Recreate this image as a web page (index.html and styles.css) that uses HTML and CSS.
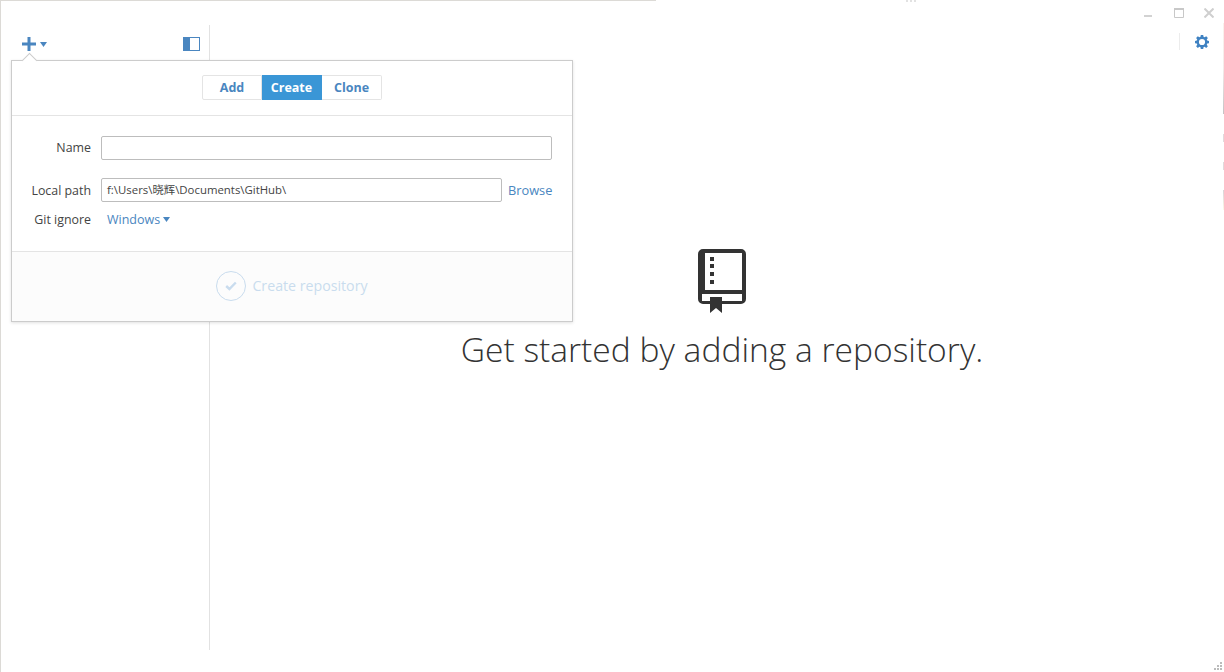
FILE: index.html
```html
<!DOCTYPE html>
<html lang="en">
<head>
<meta charset="utf-8">
<title>GitHub</title>
<link rel="stylesheet" href="styles.css">
</head>
<body>
<div class="window">
  <aside class="sidebar">
    <div class="side-head">
      <button class="add-btn" aria-label="Add">
        <svg class="plus" width="14" height="14" viewBox="0 0 14 14"><path d="M5.500 0h3v5.500H14v3H8.500V14h-3V8.500H0v-3h5.500z"/></svg>
        <svg class="caret" width="7" height="5" viewBox="0 0 7 5"><path d="M0 0h7L3.500 5z"/></svg>
      </button>
      <svg class="toggle" width="17" height="14" viewBox="0 0 17 14"><rect x=".5" y=".5" width="16" height="13" fill="#fff" stroke="#4a86c0"/><rect width="7" height="14" fill="#4a86c0"/></svg>
    </div>
  </aside>
  <main class="main">
    <div class="top">
      <svg class="gear" width="14" height="14" viewBox="0 0 15 15"><path fill-rule="evenodd" d="M6.200 0h2.600l.3 2 1.200.5 1.700-1.200 1.800 1.800-1.200 1.700.5 1.200 1.900.3v2.600l-1.900.3-.5 1.200 1.200 1.700-1.800 1.800-1.700-1.200-1.200.5-.3 2H6.200l-.3-2-1.200-.5L3 13.900l-1.800-1.800 1.200-1.700-.5-1.200L0 8.900V6.300l1.900-.3.500-1.200-1.200-1.700L3 1.300l1.700 1.200 1.200-.5zM7.500 4.200a3.300 3.300 0 1 0 0 6.600 3.300 3.300 0 0 0 0-6.600z"/></svg>
    </div>
    <div class="empty">
      <svg class="book" width="48" height="64" viewBox="0 0 48 64"><path fill-rule="evenodd" d="M5 0h38a5 5 0 0 1 5 5v45a5 5 0 0 1-5 5H5a5 5 0 0 1-5-5V5a5 5 0 0 1 5-5zM7 4v37h37V4zM4 45v7h40v-7z"/><path d="M12 48h12v16l-6-5-6 5z"/><path d="M12 8h4v4h-4zM12 15h4v4h-4zM12 23h4v4h-4zM12 31h4v4h-4z"/></svg>
      <h1 class="headline">Get started by adding a repository.</h1>
    </div>
  </main>

  <section class="popover">
    <span class="arrow"></span>
    <div class="tabs-row">
      <div class="tabs">
        <span class="tab">Add</span>
        <span class="tab active">Create</span>
        <span class="tab">Clone</span>
      </div>
    </div>
    <div class="form">
      <div class="row name-row">
        <label class="label">Name</label>
        <div class="field"></div>
      </div>
      <div class="row path-row">
        <label class="label">Local path</label>
        <div class="field path">f:\Users\晓辉\Documents\GitHub\</div>
        <a class="browse">Browse</a>
      </div>
      <div class="row ignore-row">
        <label class="label">Git ignore</label>
        <a class="drop">Windows <svg class="drop-caret" width="7" height="5" viewBox="0 0 7 5"><path d="M0 0h7L3.500 5z"/></svg></a>
      </div>
    </div>
    <div class="foot">
      <span class="check"><svg width="12" height="10" viewBox="0 0 12 10"><path d="M1.200 5l3.200 3L10.800 1.500" fill="none" stroke="#c9dcee" stroke-width="2.400"/></svg></span>
      <span class="create">Create repository</span>
    </div>
  </section>

  <div class="win-controls">
    <svg width="10" height="10" viewBox="0 0 10 10"><rect x="0" y="7" width="8" height="2" fill="#d2d2d2"/></svg>
    <svg width="10" height="10" viewBox="0 0 10 10"><path d="M.5 1.500h9v8h-9z" fill="none" stroke="#c8c8c8"/><rect width="10" height="2" fill="#c8c8c8"/></svg>
    <svg width="10" height="10" viewBox="0 0 10 10"><path d="M.5.5l9 9M9.500.5l-9 9" stroke="#cfcfcf" stroke-width="2"/></svg>
  </div>
  <span class="gear-sep"></span>
  <span class="top-mark"></span>
  <span class="edge e1"></span>
  <span class="edge e2"></span>
  <span class="edge e3"></span>
  <span class="edge e4"></span>
  <svg class="grip" width="8" height="8" viewBox="0 0 8 8" fill="#bbb"><rect x="6" y="0" width="2" height="2"/><rect x="3" y="3" width="2" height="2"/><rect x="6" y="3" width="2" height="2"/><rect x="0" y="6" width="2" height="2"/><rect x="3" y="6" width="2" height="2"/><rect x="6" y="6" width="2" height="2"/></svg>
</div>
</body>
</html>
```
FILE: styles.css
```css
* { box-sizing: border-box; }
html, body { margin: 0; height: 100%; background: #fff; overflow: hidden; }
body { font-family: "Open Sans", "Noto Sans CJK SC", sans-serif; color: #333; }
.window { position: relative; width: 1224px; height: 672px; display: flex; padding: 25px 0 22px 1px; }
.window::before { content: ""; position: absolute; left: 0; top: 0; width: 655px; height: 672px; border: 1px solid #dcdad6; border-right: 0; pointer-events: none; }
.sidebar { width: 209px; border-right: 1px solid #e2e2e2; }
.side-head { display: flex; justify-content: space-between; align-items: flex-start; padding: 12px 9px 0 21px; }
.add-btn { display: flex; align-items: center; gap: 4px; padding: 0; border: 0; background: none; height: 14px; }
.plus { fill: #4a86c0; }
.caret { fill: #4a86c0; }
.main { flex: 1; display: flex; flex-direction: column; }
.top { display: flex; justify-content: flex-end; padding: 10px 15px 0 0; }
.gear { fill: #3f82c2; }
.empty { display: flex; flex-direction: column; align-items: center; padding: 200px 0 0 10px; }
.book { fill: #333; display: block; }
.headline { margin: 11px 0 0; font-size: 33.600px; line-height: 50px; font-weight: 300; color: #333; white-space: nowrap; }

.popover { position: absolute; left: 11px; top: 60px; width: 562px; height: 262px; background: #fff; border: 1px solid #ccc; box-shadow: 0 1px 3px rgba(0,0,0,.12); display: flex; flex-direction: column; }
.arrow { position: absolute; left: 12px; top: -6px; width: 11px; height: 11px; background: #fff; border: 1px solid #ccc; border-right: 0; border-bottom: 0; transform: rotate(45deg); }
.tabs-row { height: 55px; flex: none; display: flex; justify-content: center; padding-top: 14px; border-bottom: 1px solid #e4e4e4; }
.tabs { display: flex; height: 25px; }
.tab { width: 60px; height: 25px; line-height: 23px; text-align: center; font-size: 12.500px; font-weight: 700; color: #4a86c0; border: 1px solid #e4e4e4; border-left: 0; background: #fff; }
.tab:first-child { border-left: 1px solid #e4e4e4; border-radius: 2px 0 0 2px; }
.tab:last-child { border-radius: 0 2px 2px 0; }
.tab.active { background: #3a96d6; border-color: #3a96d6; color: #fff; }
.form { flex: 1; padding: 20px 20px 0 0; }
.row { display: flex; align-items: center; font-size: 13px; }
.label { width: 79px; flex: none; text-align: right; margin-right: 10px; color: #444; font-size: 12.400px; }
.name-row .label { padding-bottom: 2px; }
.field { flex: 1; height: 24px; border: 1px solid #bdbdbd; border-radius: 2px; background: #fff; padding-left: 5px; line-height: 22px; font-size: 11.400px; color: #444; white-space: nowrap; overflow: hidden; }
.path-row { margin-top: 18px; }
.browse { width: 44px; margin-left: 6px; color: #4a86c0; font-size: 12.800px; white-space: nowrap; }
.ignore-row { margin-top: 7px; height: 20px; }
.drop { margin-left: 6px; color: #4a86c0; font-size: 12.500px; }
.drop-caret { fill: #4a86c0; vertical-align: 2px; }
.foot { flex: none; height: 70px; background: #fcfcfc; border-top: 1px solid #e4e4e4; display: flex; align-items: center; justify-content: center; gap: 6px; padding: 0 0 2px 0; }
.check { width: 30px; height: 30px; border: 1px solid #c9dcee; border-radius: 50%; display: flex; align-items: center; justify-content: center; }
.create { font-size: 14.200px; color: #c9dcee; }

.win-controls { position: absolute; right: 10px; top: 8px; display: flex; align-items: center; gap: 20px; }
.gear-sep { position: absolute; left: 1179px; top: 33px; width: 1px; height: 17px; background: #ececec; }
.top-mark { position: absolute; left: 906px; top: 0; width: 12px; height: 2px; background: repeating-linear-gradient(90deg, #e2e2e2 0 2px, #fff 2px 4px); }
.edge { position: absolute; left: 1223px; width: 1px; background: #e0dadc; }
.e1 { top: 23px; height: 91px; background: linear-gradient(#fbf1ec 0, #f4ecea 50%, #c4c2c4 100%); }
.e2 { top: 134px; height: 8px; }
.e3 { top: 162px; height: 8px; }
.e4 { top: 190px; height: 20px; background: linear-gradient(#d8d4d8, #fdf9e8); }
.grip { position: absolute; right: 2px; bottom: 2px; }
```
